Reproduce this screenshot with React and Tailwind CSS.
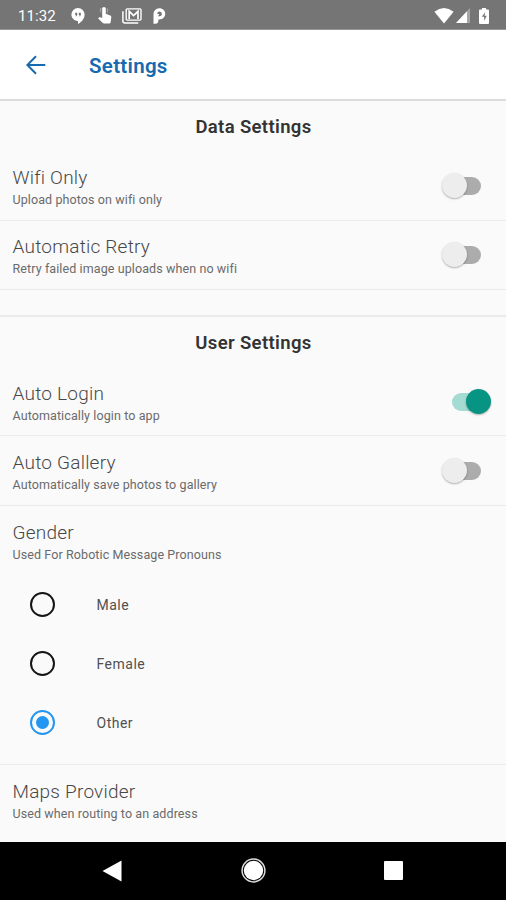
import React from "react";

function StatusBar() {
  return (
    <div className="flex h-[30px] shrink-0 items-center border-b border-[#969696] bg-[#757575] pt-[2px] text-white">
      <span className="ml-[18px] w-[53px] pt-[1px] text-[15px] leading-none tracking-[0.1px]">11:32</span>
      <svg className="h-[16px] w-[14px]" viewBox="0 0 14 16" fill="#fff">
        <path d="M7 0a6.6 6.6 0 0 0-6.6 6.6C.4 10.2 3.2 13 7 13v3c3.5-1.7 6.6-5.2 6.6-9.4A6.6 6.6 0 0 0 7 0Z" />
        <path d="M4.200 4.8h2v2.2L5.4 8.300h-.9l.5-1.300h-.8zM7.8 4.800h2v2.200L9 8.300h-.9l.5-1.300h-.8z" fill="#757575" />
      </svg>
      <svg className="ml-[13px] h-[17px] w-[14px]" viewBox="0 0 14 17" fill="#fff">
        <path d="M4.2 1.8C4.2.8 5 0 6 0s1.800.8 1.800 1.800v5l4.400 1.700c.8.3 1.200.9 1.100 1.700l-.7 5c-.1.8-.7 1.400-1.500 1.400H6c-.5 0-.9-.2-1.200-.5L.2 11.400l.7-.8c.3-.3.7-.4 1.100-.3l2.200.7z" />
        <path d="M2.900 5.400a3.800 3.800 0 0 1 .2-4.500M9 5.400a3.800 3.800 0 0 0 .2-4" fill="none" stroke="#fff" strokeOpacity=".4" />
      </svg>
      <svg className="ml-[10px] h-[16px] w-[20px]" viewBox="0 0 20 16" fill="none" stroke="#fff">
        <path d="M.9 3.200v9.900c0 1.200.8 2 2 2h13.400" strokeWidth="1.500" />
        <rect x="4.200" y=".9" width="14.800" height="11.200" rx="1" strokeWidth="1.400" />
        <path d="M7.200 11V3.300l4.400 4.200L16 3.300V11" strokeWidth="1.700" />
      </svg>
      <svg className="ml-[11px] h-[16px] w-[13px]" viewBox="0 0 13 16" fill="#fff">
        <path
          fillRule="evenodd"
          d="M.5 6A5.600 5.600 0 0 1 6.200.3c3.600 0 6 2.400 6 5.500s-2.400 5.600-5.700 5.600H5.300V13c0 1.600-1 2.700-2.700 2.700H.5zM5 8.200h1.400A2.300 2.300 0 1 0 4.300 5.900L6.300 6 5 8.200Z"
        />
      </svg>
      <svg className="ml-[268px] h-[16px] w-[20px]" viewBox="0 0 20 16" fill="#fff">
        <path d="M.4 3.700Q10-3.500 19.600 3.700L10 15.500Z" />
      </svg>
      <svg className="ml-[2px] h-[15px] w-[14px]" viewBox="0 0 14 15">
        <path d="M14 0v15H0z" fill="#fff" fillOpacity=".35" />
        <path d="M11 3.200V15H0z" fill="#fff" />
      </svg>
      <svg className="ml-[9px] h-[16px] w-[10px]" viewBox="0 0 10 16">
        <path d="M3 0h4v1.600h2q1 0 1 1V15q0 1-1 1H1q-1 0-1-1V2.600q0-1 1-1h2z" fill="#fff" />
        <path d="M6.300 4 2.800 8.800h2.400V13l2.500-5.200H5.500z" fill="#757575" />
      </svg>
    </div>
  );
}

function Header() {
  return (
    <header className="flex h-[71px] shrink-0 items-center border-b-2 border-[#dcdcdc] bg-white text-[#1769b0]">
      <svg className="ml-[26px] h-[20px] w-[20px]" viewBox="0 0 20 20" fill="none" stroke="currentColor" strokeWidth="2">
        <path d="M19.300 10H1.500M10 1.200 1.300 10l8.700 8.800" />
      </svg>
      <h1 className="ml-[43px] pt-[2px] text-[20.5px] font-semibold leading-6 tracking-[0.3px]">Settings</h1>
    </header>
  );
}

function SectionTitle({ children }) {
  return (
    <h2 className="flex h-[52px] shrink-0 items-center justify-center pl-[1px] pt-[2px] text-[18.5px] font-semibold tracking-[0.35px] text-[#333]">
      {children}
    </h2>
  );
}

function Toggle({ on }) {
  return on ? (
    <div className="mr-[15px] flex w-[39px] items-center">
      <div className="h-[18px] w-[28px] rounded-full bg-[#a4dbd3]" />
      <div className="-ml-[14px] h-[25px] w-[25px] shrink-0 rounded-full bg-[#089482] shadow-[0_1px_2px_rgba(0,0,0,0.3)]" />
    </div>
  ) : (
    <div className="mr-[25px] flex w-[39px] items-center">
      <div className="z-10 h-[25px] w-[25px] shrink-0 rounded-full bg-[#ededed] shadow-[0_1px_2px_rgba(0,0,0,0.3)]" />
      <div className="-ml-[14px] h-[18px] w-[28px] rounded-full bg-[#acacac]" />
    </div>
  );
}

function Label({ title, note }) {
  return (
    <div className="pl-[12.5px] pt-[1px]">
      <div className="text-[19px] font-light leading-[24px] tracking-[0.22px] text-[#484848]">{title}</div>
      <div className="text-[12.5px] leading-[19px] tracking-[0.1px] text-[#6a6a6a]">{note}</div>
    </div>
  );
}

function ToggleRow({ title, note, on, className }) {
  return (
    <div className={"flex shrink-0 justify-between border-b border-[#ebebeb] " + className}>
      <Label title={title} note={note} />
      <div className="flex h-[41px] items-center">
        <Toggle on={on} />
      </div>
    </div>
  );
}

function Radio({ label, selected }) {
  return (
    <div className="flex h-[59px] items-center pl-[30px]">
      <div
        className={
          "flex h-[25px] w-[25px] items-center justify-center rounded-full border-2 " +
          (selected ? "border-[#2196f3]" : "border-[#151515]")
        }
      >
        {selected && <div className="h-[13px] w-[13px] rounded-full bg-[#2196f3]" />}
      </div>
      <span className="ml-[41.5px] pt-[2px] text-[14px] tracking-[0.5px] text-[#505050]">{label}</span>
    </div>
  );
}

function NavBar() {
  return (
    <nav className="flex h-[58px] shrink-0 items-center bg-black pb-[1px]">
      <svg className="ml-[102px] h-[22px] w-[20px]" viewBox="0 0 20 22">
        <path d="M19.500.5v21L.5 11z" fill="#fff" />
      </svg>
      <svg className="ml-[119px] h-[25px] w-[25px]" viewBox="0 0 25 25">
        <circle cx="12.500" cy="12.500" r="11.400" fill="none" stroke="#ddd" strokeWidth="1.500" />
        <circle cx="12.500" cy="12.500" r="9.700" fill="#fff" />
      </svg>
      <div className="ml-[118px] h-[19px] w-[19px] rounded-[1px] bg-white" />
    </nav>
  );
}

export default function App() {
  return (
    <div className="flex h-[900px] w-[506px] flex-col overflow-hidden bg-[#fafafa] font-['Roboto',sans-serif]">
      <StatusBar />
      <Header />
      <main className="flex min-h-0 flex-1 flex-col">
        <SectionTitle>Data Settings</SectionTitle>
        <ToggleRow className="h-[68px] pt-[12px]" title="Wifi Only" note="Upload photos on wifi only" />
        <ToggleRow className="h-[69px] pt-[13px]" title="Automatic Retry" note="Retry failed image uploads when no wifi" />
        <div className="h-[27px] shrink-0 border-b-2 border-[#ebebeb]" />
        <SectionTitle>User Settings</SectionTitle>
        <ToggleRow className="h-[67px] pt-[12px]" title="Auto Login" note="Automatically login to app" on />
        <ToggleRow className="h-[70px] pt-[14px]" title="Auto Gallery" note="Automatically save photos to gallery" />
        <section className="h-[259px] shrink-0 border-b border-[#ebebeb] pt-[14px]">
          <Label title="Gender" note="Used For Robotic Message Pronouns" />
          <div className="pt-[11px]">
            <Radio label="Male" />
            <Radio label="Female" />
            <Radio label="Other" selected />
          </div>
        </section>
        <section className="pt-[14px]">
          <Label title="Maps Provider" note="Used when routing to an address" />
        </section>
      </main>
      <NavBar />
    </div>
  );
}
